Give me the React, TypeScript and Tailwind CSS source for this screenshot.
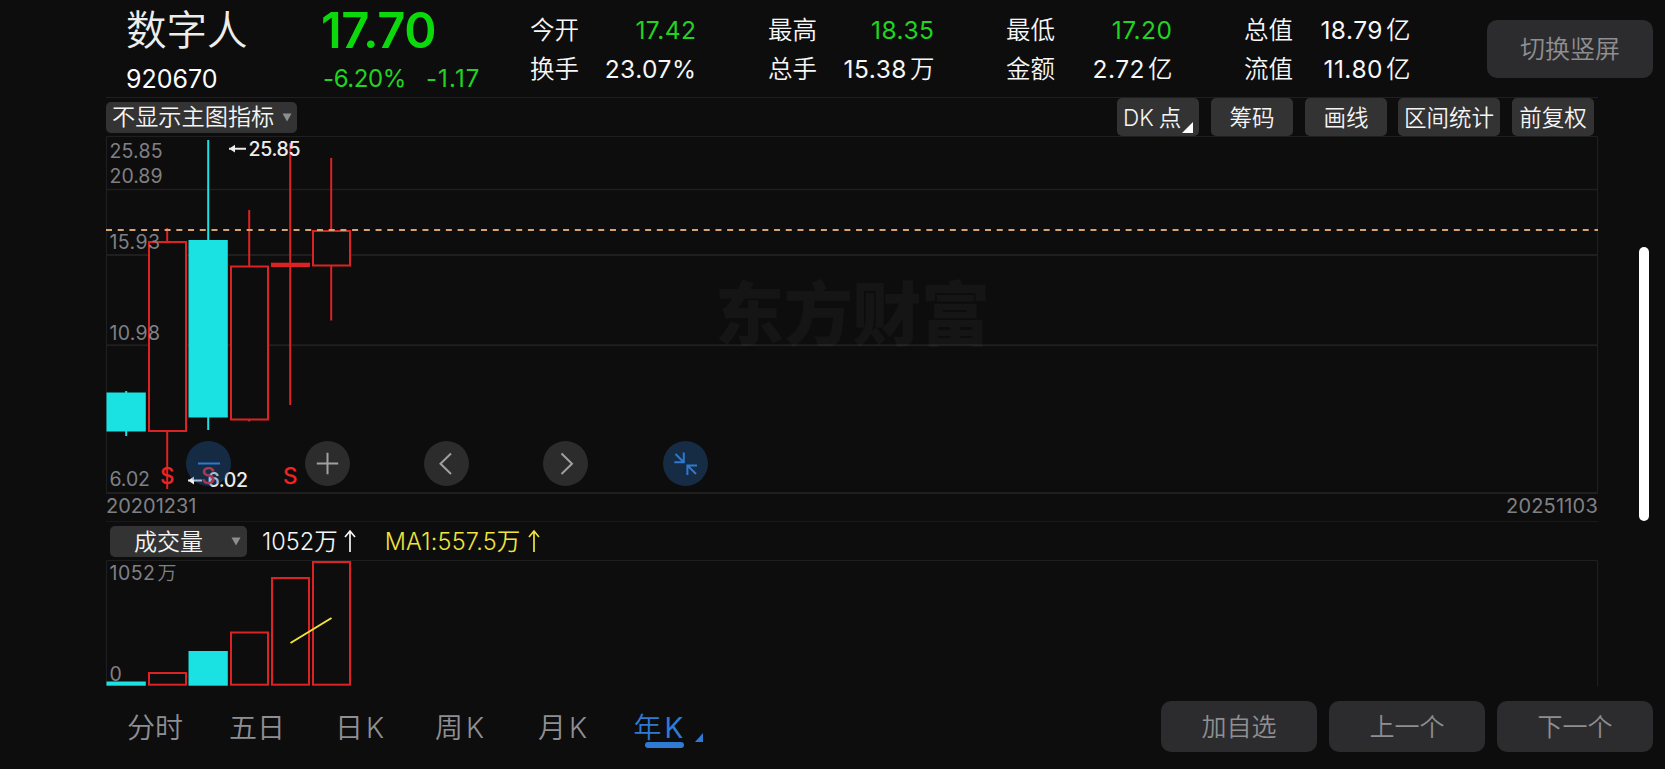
const UP = "#dc2222";
const DOWN = "#1be2e2";

const STATS = [
  [["今开", "17.42", "", true], ["换手", "23.07%", "", false]],
  [["最高", "18.35", "", true], ["总手", "15.38", "万", false]],
  [["最低", "17.20", "", true], ["金额", "2.72", "亿", false]],
  [["总值", "18.79", "亿", false], ["流值", "11.80", "亿", false]],
] as const;

// top/bottom = body, high/low = wick, all in chart pixels
const CANDLES = [
  { up: false, high: 255, top: 256.5, bottom: 295.5, low: 300 },
  { up: true, high: 92, top: 105, bottom: 296, low: 353 },
  { up: false, high: 4, top: 104, bottom: 281.5, low: 294 },
  { up: true, high: 74, top: 129.5, bottom: 284.5, low: 285.5 },
  { up: true, high: 7, top: 126.7, bottom: 131, low: 269 },
  { up: true, high: 22, top: 94, bottom: 130.5, low: 184.5 },
];

const PRICE_LABELS = [
  { y: 22, text: "25.85", w: 53 },
  { y: 46.7, text: "20.89", w: 53 },
  { y: 112.5, text: "15.93", w: 50.5 },
  { y: 203.7, text: "10.98", w: 50.5 },
  { y: 349.7, text: "6.02", w: 40.5 },
];

const VOLUMES = [
  { up: false, top: 121.5 },
  { up: true, top: 112 },
  { up: false, top: 91 },
  { up: true, top: 71.5 },
  { up: true, top: 17 },
  { up: true, top: 1 },
];

const TABS = [
  { width: "w-[102px]", a: "分时", b: "" },
  { width: "w-[106px]", a: "五日", b: "" },
  { width: "w-[100px]", a: "日", b: "K" },
  { width: "w-[103px]", a: "周", b: "K" },
  { width: "w-[95.5px]", a: "月", b: "K" },
];

function Bar({ i, top, bottom, up }: { i: number; top: number; bottom: number; up: boolean }) {
  const x = i * 41;
  if (!up) return <rect x={x + 0.5} y={top} width={39.3} height={bottom - top} fill={DOWN} />;
  if (bottom - top < 5) return <rect x={x + 1} y={top} width={39} height={bottom - top} fill={UP} />;
  return (
    <rect x={x + 2} y={top + 1} width={37} height={bottom - top - 2} fill="#0d0d0d" stroke={UP} strokeWidth={2} />
  );
}

function Header() {
  return (
    <header className="flex h-[97px] pl-[126px]">
      <div className="w-[195px]">
        <h1 className="mt-[4px] h-[54px] text-[40.5px] font-[350] leading-[54px] text-[#ededed]">数字人</h1>
        <p className="h-[39px] text-[25px] leading-[43px] text-white">920670</p>
      </div>
      <div className="w-[209px] text-[#22d422]">
        <p className="h-[61px] text-[49px] font-semibold leading-[61px] tracking-[-0.4px] text-[#0bd90b]">17.70</p>
        <p className="flex h-[36px] gap-[20px] pl-[2px] text-[24px] leading-[36px]">
          <span className="tracking-[-0.4px]">-6.20%</span>
          <span className="tracking-[1.1px]">-1.17</span>
        </p>
      </div>
      <div className="flex gap-[71.5px] pt-[11px]">
        {STATS.map((rows) => (
          <div key={rows[0][0]} className="w-[166.5px]">
            {rows.map(([label, value, unit, green]) => (
              <div key={label} className="flex h-[39px] items-center justify-between text-[24.5px] text-[#f7f7f7]">
                <span className="font-[350]">{label}</span>
                <span className={green ? "flex gap-[3px] text-[#22d422]" : "flex gap-[3px]"}>
                  <span className="tracking-[0.5px]">{value}</span>
                  {unit && <span className="font-[350]">{unit}</span>}
                </span>
              </div>
            ))}
          </div>
        ))}
      </div>
      <button className="ml-auto mr-[12px] mt-[20px] h-[58px] w-[166px] rounded-[10px] bg-[#2c2c2e] pt-[2px] text-[25px] font-[350] text-[#8f8f92]">
        切换竖屏
      </button>
    </header>
  );
}

function Toolbar() {
  return (
    <div className="flex h-[39px] items-center border-t border-[#1f1f1f]">
      <button className="flex h-[31px] w-[191px] items-center gap-[8px] rounded-[5px] bg-[#333] pl-[6px] text-[23.2px] font-[350] leading-none text-[#f5f5f5]">
        <span className="pt-[2px]">不显示主图指标</span>
        <Caret />
      </button>
      <div className="ml-auto mr-[4px] flex h-full text-[22.5px] font-[350] text-[#f5f5f5]">
        <button className="relative mr-[12px] flex w-[82px] items-center gap-[5px] rounded-[5px] bg-[#333] pl-[6px] pt-[1px]">
          <span>DK</span>
          <span>点</span>
          <svg className="absolute bottom-[3px] right-[6px]" width="11" height="11">
            <path d="M11 0v11H0z" fill="#fff" />
          </svg>
        </button>
        <button className="mr-[12px] w-[82px] rounded-[5px] bg-[#333] pt-[1px]">筹码</button>
        <button className="mr-[11px] w-[82px] rounded-[5px] bg-[#333] pt-[1px]">画线</button>
        <button className="mr-[12px] w-[102px] rounded-[5px] bg-[#333] pt-[1px]">区间统计</button>
        <button className="w-[82px] rounded-[5px] bg-[#333] pt-[1px]">前复权</button>
      </div>
    </div>
  );
}

function Caret() {
  return (
    <svg width="10" height="9" className="shrink-0">
      <path d="M0.5 0.5h9L5 8.5z" fill="#8e8e90" />
    </svg>
  );
}

function PriceChart() {
  return (
    <svg width="1492" height="358" className="block">
      <g stroke="#1f1f1f" fill="none">
        <path d="M0.5 357V0.5H1491.5V357" />
        <path d="M0 53.5H1492" strokeWidth="1.5" />
        <path d="M0 119H1492M0 209.3H1492M0 357H1492" strokeWidth="2" />
      </g>
      <text x="609" y="204" textLength="275" fontSize="69" fontWeight="900" fill="#fff" fillOpacity="0.035">
        东方财富
      </text>
      {CANDLES.map((c, i) => (
        <g key={i}>
          <path d={`M${i * 41 + 20.2} ${c.high}V${c.low}`} stroke={c.up ? UP : DOWN} strokeWidth={2} />
          <Bar i={i} top={c.top} bottom={c.bottom} up={c.up} />
        </g>
      ))}
      <g fontSize="19.5" fill="#808084">
        {PRICE_LABELS.map((l) => (
          <text key={l.text} x="3.5" y={l.y} textLength={l.w}>
            {l.text}
          </text>
        ))}
      </g>
      <path d="M0 94H1492" stroke="#d6a472" strokeWidth="2" strokeDasharray="6 5.72" />
      <g fill="#ececec" fontSize="19.5" fontWeight="550">
        <path d="M123 11.8H140v1.9H123zM123 12.7l6-3.9v7.8z" />
        <text x="142.5" y="19.7" textLength="52">
          25.85
        </text>
        <path d="M82 343.6H96v1.9H82zM82 344.5l6-3.9v7.8z" />
        <text x="101.5" y="351.3" textLength="40.5">
          6.02
        </text>
      </g>
      <g fill="#f02323" fontSize="22.5" fontWeight="500" textAnchor="middle">
        <text x="61.2" y="348">S</text>
        <text x="102.2" y="348">S</text>
        <text x="184.2" y="348">S</text>
      </g>
    </svg>
  );
}

function ChartControls() {
  return (
    <div className="absolute left-[79.5px] top-[305px] flex gap-[74.3px]">
      <button className="h-[45px] w-[45px] rounded-full bg-[#2465ad]/35">
        <Glyph d="M12 22.5H34" color="#2f78d0" />
      </button>
      <button className="h-[45px] w-[45px] rounded-full bg-[#2c2c2c]">
        <Glyph d="M11.8 22.5H33.2M22.5 11.8V33.2" color="#a0a0a2" />
      </button>
      <button className="h-[45px] w-[45px] rounded-full bg-[#2c2c2c]">
        <Glyph d="M27 12.5L16.5 22.7L27 33" color="#a0a0a2" />
      </button>
      <button className="h-[45px] w-[45px] rounded-full bg-[#2c2c2c]">
        <Glyph d="M18.5 12.5L29 22.7L18.5 33" color="#a0a0a2" />
      </button>
      <button className="h-[45px] w-[45px] rounded-full bg-[#162c45]">
        <Glyph d="M12.5 13L20.5 21M20.8 11.5V21.2H11.3M33 33L25 25M24.4 34V24.4H34" color="#2f78d0" />
      </button>
    </div>
  );
}

function Glyph({ d, color }: { d: string; color: string }) {
  return (
    <svg width="45" height="45" fill="none" stroke={color} strokeWidth="2">
      <path d={d} />
    </svg>
  );
}

function UpArrow() {
  return (
    <svg width="12" height="24" fill="none" stroke="currentColor" strokeWidth="1.7">
      <path d="M6 23V2M1 8L6 2L11 8" />
    </svg>
  );
}

function VolumeChart() {
  return (
    <svg width="1492" height="126" className="block">
      <path d="M0.5 126V0.5H1491.5V126" stroke="#1f1f1f" fill="none" />
      {VOLUMES.map((v, i) => (
        <Bar key={i} i={i} top={v.top} bottom={125.7} up={v.up} />
      ))}
      <path d="M184.5 83L225.5 58" stroke="#f2e43a" strokeWidth="2" />
      <g fontSize="19.5" fill="#808084">
        <text x="3.5" y="19.7" textLength="45.5">
          1052
        </text>
        <text x="51.5" y="19.7" fontSize="19" fontWeight="350">
          万
        </text>
        <text x="3.5" y="121">
          0
        </text>
      </g>
    </svg>
  );
}

function Footer() {
  return (
    <footer className="flex h-[83px] pl-[127px] pr-[12px]">
      <nav className="flex pt-[22px] text-[28px] font-[350] leading-[40px] text-[#8f8f93]">
        {TABS.map((t) => (
          <button key={t.a} className={`${t.width} flex h-[40px] gap-[3px]`}>
            <span>{t.a}</span>
            {t.b && <span className="font-[350]">{t.b}</span>}
          </button>
        ))}
        <button className="relative flex h-[40px] gap-[3px] text-[#2f7ad2]">
          <span>年</span>
          <span className="font-normal">K</span>
          <span className="absolute left-[11px] top-[34px] h-[6px] w-[39px] rounded-full bg-[#2f7ad2]" />
          <svg width="8" height="9" className="absolute left-[61px] top-[25px]">
            <path d="M8 0v9H0z" fill="#2f7ad2" />
          </svg>
        </button>
      </nav>
      <div className="ml-auto flex gap-[12px] pt-[15px] text-[25px] font-[350] text-[#8f8f92]">
        {["加自选", "上一个", "下一个"].map((label) => (
          <button key={label} className="h-[51px] w-[156px] rounded-[10px] bg-[#2c2c2e] pt-[2px]">
            {label}
          </button>
        ))}
      </div>
    </footer>
  );
}

export default function App() {
  return (
    <div className="h-[769px] w-[1665px] overflow-hidden bg-[#0d0d0d] font-[Inter,'Noto_Sans_CJK_SC',sans-serif]">
      <Header />
      <main className="flex h-[589px] pl-[106px]">
        <div className="w-[1492px]">
          <Toolbar />
          <div className="relative">
            <PriceChart />
            <ChartControls />
          </div>
          <div className="flex h-[27px] justify-between text-[20px] leading-[25px] text-[#808084]">
            <span>20201231</span>
            <span className="tracking-[0.2px]">20251103</span>
          </div>
          <div className="flex h-[39px] items-center border-t border-[#191919] pl-[4px] text-[23.5px] font-[350] text-[#f5f5f5]">
            <button className="mr-[15px] flex h-[31px] w-[137px] items-center justify-between rounded-[5px] bg-[#333] pl-[24px] pr-[6px] text-[23px] leading-none">
              <span className="pt-[2px]">成交量</span>
              <Caret />
            </button>
            <span className="mr-[6px] pt-[2px]">1052万</span>
            <UpArrow />
            <span className="ml-[29px] mr-[7px] pt-[2px] tracking-[0.2px] text-[#f2e43a]">MA1:557.5万</span>
            <span className="text-[#f2e43a]">
              <UpArrow />
            </span>
          </div>
          <VolumeChart />
        </div>
        <div className="ml-[41px] mt-[150px] h-[274px] w-[10px] rounded-full bg-white" />
      </main>
      <Footer />
    </div>
  );
}
